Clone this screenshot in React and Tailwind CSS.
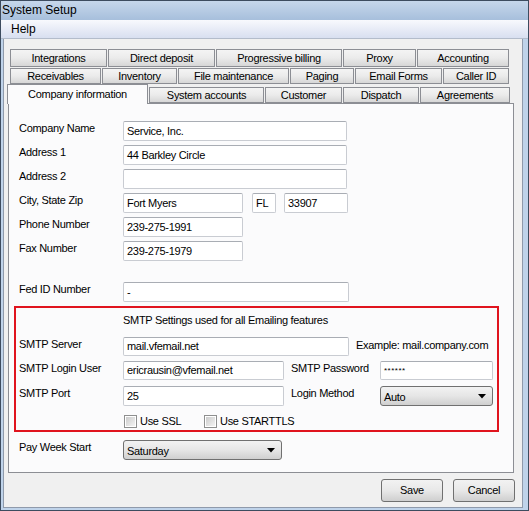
import React from 'react';

const Tab = ({ label, w, h = 'h-[18px]' }) => (
  <div
    className={`${w} ${h} shrink-0 flex items-center justify-center border border-[#8c8e94] bg-gradient-to-b from-[#f4f4f4] via-[#ebebeb] to-[#d7d7d7] leading-none`}
  >
    {label}
  </div>
);

const Field = ({ w, value, h = 'h-[20px]', small }) => (
  <div
    className={`${w} ${h} shrink-0 flex items-center px-[3px] bg-white border border-[#c9ccd2] border-t-[#a9adb4] rounded-[2px] ${small ? 'text-[8px] tracking-[0.5px]' : ''}`}
  >
    {value}
  </div>
);

const Combo = ({ w, value }) => (
  <div
    className={`${w} h-[20px] shrink-0 flex items-center justify-between pl-[3px] pr-[6px] border border-[#707070] rounded-[3px] bg-gradient-to-b from-[#f2f2f2] via-[#e6e6e6] to-[#cfcfcf]`}
  >
    <span className="pt-[2px]">{value}</span>
    <svg width="8" height="5" viewBox="0 0 8 5">
      <path d="M0 0h8L4 4.5z" fill="#000" />
    </svg>
  </div>
);

const Check = ({ label, w = '' }) => (
  <div className={`flex items-center gap-[3px] ${w}`}>
    <div className="w-[13px] h-[13px] border border-[#8e8f8f] bg-white p-px">
      <div className="w-full h-full bg-gradient-to-br from-[#cbcbcb] to-[#f4f4f4]" />
    </div>
    <span>{label}</span>
  </div>
);

const Row = ({ label, children, className = '' }) => (
  <div className={`flex items-start h-[20px] ${className}`}>
    <div className="w-[104px] shrink-0 -mt-[1px]">{label}</div>
    {children}
  </div>
);

const Button = ({ label }) => (
  <div className="w-[62px] h-[23px] flex items-center justify-center border border-[#707070] rounded-[3px] bg-gradient-to-b from-[#f2f2f2] via-[#e8e8e8] to-[#cfcfcf]">
    {label}
  </div>
);

export default function App() {
  return (
    <div className="w-[529px] h-[511px] flex flex-col border border-[#3d4c5f] bg-[#bfd3ea] font-['Liberation_Sans',Arial,sans-serif] text-[11px] tracking-[-0.3px] text-black overflow-hidden">
      {/* title bar */}
      <div className="h-[19px] shrink-0 pl-[1px] text-[12px] tracking-normal leading-[19px] bg-gradient-to-b from-[#c6d7eb] to-[#a7bfdc]">
        System Setup
      </div>

      <div className="flex-1 flex flex-col pl-[2px] pr-[5px] pb-[2px]">
        {/* menu */}
        <div className="h-[19px] shrink-0 text-[12px] tracking-normal leading-[18px] bg-gradient-to-b from-[#f8f9fd] to-[#d8dff0] border-b border-[#b3bccb] -ml-[2px] -mr-[5px] pl-[10px]">
          Help
        </div>

        {/* client area */}
        <div className="flex-1 bg-[#f0f0f0] border-l border-r border-b border-[#8f9aab] pl-[4px]">
          <div className="w-[507px] mt-[10px]">
            {/* tab rows */}
            <div className="flex gap-[1px] pl-[2px]">
              <Tab label="Integrations" w="w-[97px]" />
              <Tab label="Direct deposit" w="w-[107px]" />
              <Tab label="Progressive billing" w="w-[126px]" />
              <Tab label="Proxy" w="w-[73px]" />
              <Tab label="Accounting" w="w-[92px]" />
            </div>
            <div className="flex gap-[1px] pl-[2px] mt-[1px]">
              <Tab label="Receivables" w="w-[91px]" h="h-[16px]" />
              <Tab label="Inventory" w="w-[75px]" h="h-[16px]" />
              <Tab label="File maintenance" w="w-[111px]" h="h-[16px]" />
              <Tab label="Paging" w="w-[64px]" h="h-[16px]" />
              <Tab label="Email Forms" w="w-[87px]" h="h-[16px]" />
              <Tab label="Caller ID" w="w-[66px]" h="h-[16px]" />
            </div>
            <div className="relative z-10 flex items-end gap-[1px] h-[20px] -ml-[1px]">
              <div className="w-[141px] h-[20px] shrink-0 flex justify-center pt-[1px] bg-[#fbfbfc] border border-b-0 border-[#8c8e94]">
                Company information
              </div>
              <div className="flex gap-[1px] mb-[1px]">
                <Tab label="System accounts" w="w-[115px]" h="h-[16px]" />
                <Tab label="Customer" w="w-[77px]" h="h-[16px]" />
                <Tab label="Dispatch" w="w-[76px]" h="h-[16px]" />
                <Tab label="Agreements" w="w-[90px]" h="h-[16px]" />
              </div>
            </div>

            {/* tab panel */}
            <div className="w-[506px] h-[370px] -mt-[1px] border border-[#8c8e94] bg-[#fbfbfc] pl-[5px] pt-[17px]">
              <div className="pl-[5px] flex flex-col gap-[4px]">
                <Row label="Company Name">
                  <Field w="w-[224px]" value="Service, Inc." />
                </Row>
                <Row label="Address 1">
                  <Field w="w-[224px]" value="44 Barkley Circle" />
                </Row>
                <Row label="Address 2">
                  <Field w="w-[224px]" value="" />
                </Row>
                <Row label="City, State Zip">
                  <Field w="w-[120px]" value="Fort Myers" />
                  <div className="w-[9px]" />
                  <Field w="w-[24px]" value="FL" />
                  <div className="w-[8px]" />
                  <Field w="w-[64px]" value="33907" />
                </Row>
                <Row label="Phone Number">
                  <Field w="w-[120px]" value="239-275-1991" />
                </Row>
                <Row label="Fax Number">
                  <Field w="w-[120px]" value="239-275-1979" />
                </Row>
                <Row label="Fed ID Number" className="mt-[17px]">
                  <Field w="w-[226px]" value="-" />
                </Row>
              </div>

              {/* SMTP box */}
              <div className="w-[485px] mt-[4px] border-2 border-[#e0141e] pl-[3px] pb-[2px]">
                <div className="pl-[104px] mt-[5px] h-[14px] leading-[14px]">
                  SMTP Settings used for all Emailing features
                </div>
                <Row label="SMTP Server" className="mt-[10px]">
                  <Field w="w-[226px]" value="mail.vfemail.net" h="h-[19px]" />
                  <div className="ml-[7px]">Example: mail.company.com</div>
                </Row>
                <Row label="SMTP Login User" className="mt-[4px]">
                  <Field w="w-[161px]" value="ericrausin@vfemail.net" h="h-[19px]" />
                  <div className="w-[96px] pl-[7px] shrink-0 -mt-[1px]">SMTP Password</div>
                  <Field w="w-[113px]" value="******" h="h-[19px]" small />
                </Row>
                <Row label="SMTP Port" className="mt-[5px]">
                  <Field w="w-[161px]" value="25" />
                  <div className="w-[96px] pl-[7px] shrink-0 -mt-[1px]">Login Method</div>
                  <Combo w="w-[113px]" value="Auto" />
                </Row>
                <div className="flex pl-[105px] mt-[8px] h-[14px]">
                  <Check label="Use SSL" w="w-[80px]" />
                  <Check label="Use STARTTLS" />
                </div>
              </div>

              <div className="pl-[5px] mt-[8px]">
                <Row label="Pay Week Start">
                  <Combo w="w-[159px]" value="Saturday" />
                </Row>
              </div>
            </div>

            {/* buttons */}
            <div className="flex justify-end gap-[10px] mt-[6px]">
              <Button label="Save" />
              <Button label="Cancel" />
            </div>
          </div>
        </div>
      </div>
    </div>
  );
}
